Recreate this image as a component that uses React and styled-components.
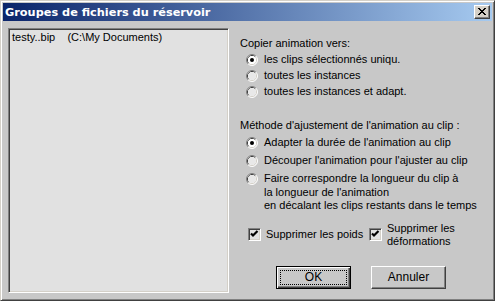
import React from 'react';
import styled, { createGlobalStyle } from 'styled-components';

const Global = createGlobalStyle`
  html, body { margin: 0; padding: 0; background: #c8c8c8; }
  body { font-family: "Liberation Sans", Arial, sans-serif; font-size: 11px; color: #000; }
`;

const Window = styled.div`
  width: 495px;
  height: 301px;
  box-sizing: border-box;
  background: #c8c8c8;
  border: 1px solid;
  border-color: #d4d0c8 #404040 #404040 #d4d0c8;
  box-shadow: inset 1px 1px 0 #fff, inset -1px -1px 0 #808080;
  padding: 2px;
  display: flex;
  flex-direction: column;
`;

const TitleBar = styled.div`
  height: 18px;
  flex: none;
  display: flex;
  align-items: center;
  justify-content: space-between;
  background: linear-gradient(to right, #0a246a, #a6caf0);
  padding: 0 2px 0 2px;
`;

const Title = styled.span`
  color: #fff;
  font-family: "DejaVu Sans", Tahoma, sans-serif;
  font-weight: bold;
  font-size: 11.3px;
`;

const CloseButton = styled.div`
  width: 16px;
  height: 14px;
  box-sizing: border-box;
  background: #d4d0c8;
  border: 1px solid;
  border-color: #fff #404040 #404040 #fff;
  box-shadow: inset -1px -1px 0 #808080;
  display: flex;
  align-items: center;
  justify-content: center;
  padding: 0 1px 1px 0;
`;

const Body = styled.div`
  flex: 1;
  display: flex;
  padding: 7px 0 0 5px;
`;

const ListBox = styled.div`
  width: 221px;
  height: 265px;
  box-sizing: border-box;
  background: #e1e1e1;
  border: 1px solid;
  border-color: #808080 #fff #fff #808080;
  box-shadow: inset 1px 1px 0 #404040, inset -1px -1px 0 #d4d0c8;
  padding: 2px 3px;
`;

const ListItem = styled.div`
  line-height: 13px;
  white-space: pre;
`;

const Panel = styled.div`
  margin-left: 11px;
  padding-top: 9px;
  display: flex;
  flex-direction: column;
`;

const GroupLabel = styled.div`
  line-height: 13px;
  margin-top: ${p => p.$gap || 0}px;
`;

const RadioList = styled.div`
  display: flex;
  flex-direction: column;
  padding-left: 6px;
  margin-top: ${p => p.$top || 0}px;
`;

const RadioRow = styled.div`
  display: flex;
  align-items: flex-start;
  height: ${p => (p.$multi ? 'auto' : `${p.$h}px`)};
  padding-top: ${p => p.$pad}px;
  box-sizing: border-box;
`;

const RadioMark = styled.svg`
  flex: none;
  width: 12px;
  height: 12px;
  margin-right: 6px;
  margin-top: 1px;
`;

const RadioText = styled.div`
  line-height: ${p => p.$lh || 13}px;
`;

const CheckRow = styled.div`
  display: flex;
  align-items: center;
  padding-left: 8px;
  margin-top: 9px;
`;

const CheckItem = styled.div`
  display: flex;
  align-items: center;
  width: ${p => (p.$w ? `${p.$w}px` : 'auto')};
`;

const CheckBox = styled.div`
  width: 13px;
  height: 13px;
  box-sizing: border-box;
  flex: none;
  background: #e1e1e1;
  border: 1px solid;
  border-color: #808080 #fff #fff #808080;
  box-shadow: inset 1px 1px 0 #404040, inset -1px -1px 0 #d4d0c8;
  display: flex;
  align-items: center;
  justify-content: center;
  margin-right: 5px;
`;

const CheckText = styled.div`
  line-height: 13px;
`;

const ButtonRow = styled.div`
  display: flex;
  gap: 20px;
  padding-left: 36px;
  margin-top: 18px;
`;

const Button = styled.div`
  width: 75px;
  height: 23px;
  box-sizing: border-box;
  background: #c8c8c8;
  position: relative;
  display: flex;
  align-items: center;
  justify-content: center;
  font-size: 12px;
  border: 1px solid;
  border-color: ${p => (p.$default ? '#000' : '#fff #404040 #404040 #fff')};
  box-shadow: ${p =>
    p.$default
      ? 'inset 1px 1px 0 #fff, inset -1px -1px 0 #404040, inset -2px -2px 0 #808080'
      : 'inset -1px -1px 0 #808080'};
`;

const Focus = styled.div`
  position: absolute;
  inset: 3px;
  border: 1px dotted #000;
`;

const Radio = ({ checked }) => (
  <RadioMark viewBox="0 0 12 12">
    <circle cx="6" cy="6" r="5" fill="#fff" />
    <path d="M2.11 9.89 A5.5 5.5 0 0 1 9.89 2.11" fill="none" stroke="#808080" />
    <path d="M9.89 2.11 A5.5 5.5 0 0 1 2.11 9.89" fill="none" stroke="#fff" />
    <path d="M2.82 9.18 A4.5 4.5 0 0 1 9.18 2.82" fill="none" stroke="#404040" />
    <path d="M9.18 2.82 A4.5 4.5 0 0 1 2.82 9.18" fill="none" stroke="#d4d0c8" />
    <circle cx="6" cy="6" r="4" fill={checked ? '#fff' : '#e8e8e8'} />
    {checked && <circle cx="6" cy="6" r="2" fill="#000" />}
  </RadioMark>
);

const Check = () => (
  <CheckBox>
    <svg width="9" height="9" viewBox="0 0 9 9">
      <path d="M1 3.5 L3 5.5 L7.5 1" fill="none" stroke="#000" strokeWidth="2.2" />
    </svg>
  </CheckBox>
);

export default function App() {
  return (
    <>
      <Global />
      <Window>
        <TitleBar>
          <Title>Groupes de fichiers du réservoir</Title>
          <CloseButton>
            <svg width="8" height="7" viewBox="0 0 8 7">
              <path d="M0.5 0 L7.5 7 M7.5 0 L0.5 7 M1.5 0 L8.5 7 M8.5 0 L1.5 7" stroke="#000" strokeWidth="1" fill="none" transform="translate(-0.5 0)" />
            </svg>
          </CloseButton>
        </TitleBar>
        <Body>
          <ListBox>
            <ListItem>{'testy..bip    (C:\\My Documents)'}</ListItem>
          </ListBox>
          <Panel>
            <GroupLabel>Copier animation vers:</GroupLabel>
            <RadioList $top={1}>
              <RadioRow $h={16} $pad={2}><Radio checked /><RadioText>les clips sélectionnés uniqu.</RadioText></RadioRow>
              <RadioRow $h={16} $pad={2}><Radio /><RadioText>toutes les instances</RadioText></RadioRow>
              <RadioRow $h={16} $pad={2}><Radio /><RadioText>toutes les instances et adapt.</RadioText></RadioRow>
            </RadioList>
            <GroupLabel $gap={20}>Méthode d'ajustement de l'animation au clip :</GroupLabel>
            <RadioList $top={1}>
              <RadioRow $h={18} $pad={3}><Radio checked /><RadioText>Adapter la durée de l'animation au clip</RadioText></RadioRow>
              <RadioRow $h={18} $pad={3}><Radio /><RadioText>Découper l'animation pour l'ajuster au clip</RadioText></RadioRow>
              <RadioRow $multi $pad={3}>
                <Radio />
                <RadioText $lh={13.5}>
                  Faire correspondre la longueur du clip à<br />
                  la longueur de l'animation<br />
                  en décalant les clips restants dans le temps
                </RadioText>
              </RadioRow>
            </RadioList>
            <CheckRow>
              <CheckItem $w={121}>
                <Check />
                <CheckText>Supprimer les poids</CheckText>
              </CheckItem>
              <CheckItem>
                <Check />
                <CheckText>Supprimer les<br />déformations</CheckText>
              </CheckItem>
            </CheckRow>
            <ButtonRow>
              <Button $default><Focus />OK</Button>
              <Button>Annuler</Button>
            </ButtonRow>
          </Panel>
        </Body>
      </Window>
    </>
  );
}
